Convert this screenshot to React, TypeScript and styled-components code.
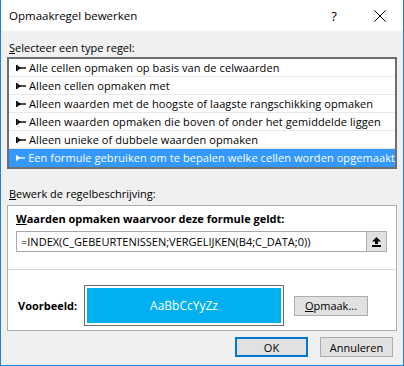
import React from "react"
import styled, { createGlobalStyle } from "styled-components"

const GlobalStyle = createGlobalStyle`
  * { box-sizing: border-box; }
  body {
    margin: 0;
    font-family: "Open Sans", "Noto Sans", sans-serif;
    font-size: 11px;
    color: #000;
  }
`

const Window = styled.div`
  width: 404px;
  height: 366px;
  display: flex;
  flex-direction: column;
  border: 1px solid #1883d7;
  border-top: none;
  background: #f0f0f0;
  overflow: hidden;
`

const TitleBar = styled.div`
  height: 31px;
  flex: none;
  background: #fff;
  display: flex;
  align-items: center;
  padding-left: 8px;
  font-size: 11.5px;
`

const Title = styled.span`
  flex: 1;
`

const TitleButton = styled.div`
  width: 46px;
  height: 31px;
  display: flex;
  align-items: center;
  justify-content: center;
  font-size: 13px;
`

const Body = styled.div`
  flex: 1;
  display: flex;
  flex-direction: column;
  padding: 9px 6px 0 6px;
`

const Label = styled.div<{ $top?: number }>`
  line-height: 16px;
  height: 16px;
  margin-top: ${p => p.$top ?? 0}px;
  padding-left: 2px;
  u { text-decoration: underline; }
`

const ListBox = styled.div`
  margin-top: 1px;
  height: 112px;
  border: 2px solid #6e6e6e;
  background: #fff;
  display: flex;
  flex-direction: column;
`

const Row = styled.div<{ $selected?: boolean }>`
  height: 18px;
  flex: none;
  display: flex;
  align-items: center;
  padding-left: 7px;
  gap: 3px;
  white-space: nowrap;
  letter-spacing: 0.08px;
  border-bottom: 1px solid ${p => (p.$selected ? "transparent" : "#e8e8e8")};
  background: ${p => (p.$selected ? "#3399ff" : "#fff")};
  color: ${p => (p.$selected ? "#fff" : "#000")};
`

const GroupBox = styled.div`
  margin-top: 3px;
  height: 126px;
  border: 1px solid #adadad;
  background: #fff;
  display: flex;
  flex-direction: column;
`

const FormulaSection = styled.div`
  padding: 5px 9px 0 8px;
  height: 63px;
`

const BoldLabel = styled.div`
  font-weight: 700;
  line-height: 16px;
  height: 16px;
  u { text-decoration: underline; }
`

const InputRow = styled.div`
  margin-top: 4px;
  height: 21px;
  display: flex;
`

const Input = styled.div`
  flex: 1;
  border: 1px solid #a8a8a8;
  border-right: none;
  display: flex;
  align-items: center;
  padding-left: 4px;
  white-space: nowrap;
  overflow: hidden;
`

const IconButton = styled.div`
  width: 21px;
  border: 1px solid #adadad;
  background: #e1e1e1;
  display: flex;
  align-items: center;
  justify-content: center;
`

const Separator = styled.div`
  height: 1px;
  background: #d4d4d4;
  margin-right: 1px;
`

const PreviewRow = styled.div`
  display: flex;
  align-items: center;
  padding: 15px 0 0 10px;
`

const PreviewLabel = styled(BoldLabel)`
  width: 66px;
`

const PreviewBox = styled.div`
  width: 200px;
  height: 41px;
  border: 1px solid #6a6a6a;
  padding: 2px;
  background: #fff;
`

const PreviewFill = styled.div`
  height: 100%;
  background: #00b0f0;
  color: #fff;
  font-size: 12px;
  display: flex;
  align-items: center;
  justify-content: center;
`

const Button = styled.div<{ $default?: boolean }>`
  height: 20px;
  display: flex;
  align-items: center;
  justify-content: center;
  background: #e1e1e1;
  border: ${p => (p.$default ? "2px solid #0078d7" : "1px solid #adadad")};
  u { text-decoration: underline; }
`

const OpmaakButton = styled(Button)`
  width: 74px;
  margin-left: 10px;
`

const Footer = styled.div`
  display: flex;
  justify-content: flex-end;
  gap: 12px;
  margin-top: 6px;
  padding-right: 4px;
`

const FooterButton = styled(Button)`
  width: 73px;
`

const Pin = () => (
  <svg width="10" height="8" viewBox="0 0 10 8">
    <rect x="0" y="1" width="1.6" height="6" fill="currentColor" />
    <polygon points="1.5,1.5 1.5,6.5 5,4" fill="currentColor" />
    <rect x="4" y="3.3" width="6" height="1.4" fill="currentColor" />
  </svg>
)

const UploadIcon = () => (
  <svg width="9" height="10" viewBox="0 0 9 10">
    <polygon points="4.5,0 9,4.5 6,4.5 6,7 3,7 3,4.5 0,4.5" fill="#000" />
    <rect x="0" y="8" width="9" height="2" fill="#000" />
  </svg>
)

const rules = [
  "Alle cellen opmaken op basis van de celwaarden",
  "Alleen cellen opmaken met",
  "Alleen waarden met de hoogste of laagste rangschikking opmaken",
  "Alleen waarden opmaken die boven of onder het gemiddelde liggen",
  "Alleen unieke of dubbele waarden opmaken",
  "Een formule gebruiken om te bepalen welke cellen worden opgemaakt",
]

export default function App() {
  return (
    <>
      <GlobalStyle />
      <Window>
        <TitleBar>
          <Title>Opmaakregel bewerken</Title>
          <TitleButton>?</TitleButton>
          <TitleButton>
            <svg width="12" height="12" viewBox="0 0 12 12">
              <path d="M0.5 0.5 L11.5 11.5 M11.5 0.5 L0.5 11.5" stroke="#000" strokeWidth="1" />
            </svg>
          </TitleButton>
        </TitleBar>
        <Body>
          <Label>
            <u>S</u>electeer een type regel:
          </Label>
          <ListBox>
            {rules.map((r, i) => (
              <Row key={r} $selected={i === rules.length - 1}>
                <Pin />
                {r}
              </Row>
            ))}
          </ListBox>
          <Label $top={17}>
            <u>B</u>ewerk de regelbeschrijving:
          </Label>
          <GroupBox>
            <FormulaSection>
              <BoldLabel>
                <u>W</u>aarden opmaken waarvoor deze formule geldt:
              </BoldLabel>
              <InputRow>
                <Input>=INDEX(C_GEBEURTENISSEN;VERGELIJKEN(B4;C_DATA;0))</Input>
                <IconButton>
                  <UploadIcon />
                </IconButton>
              </InputRow>
            </FormulaSection>
            <Separator />
            <PreviewRow>
              <PreviewLabel>Voorbeeld:</PreviewLabel>
              <PreviewBox>
                <PreviewFill>AaBbCcYyZz</PreviewFill>
              </PreviewBox>
              <OpmaakButton>
                <u>O</u>pmaak...
              </OpmaakButton>
            </PreviewRow>
          </GroupBox>
          <Footer>
            <FooterButton $default>OK</FooterButton>
            <FooterButton>Annuleren</FooterButton>
          </Footer>
        </Body>
      </Window>
    </>
  )
}
